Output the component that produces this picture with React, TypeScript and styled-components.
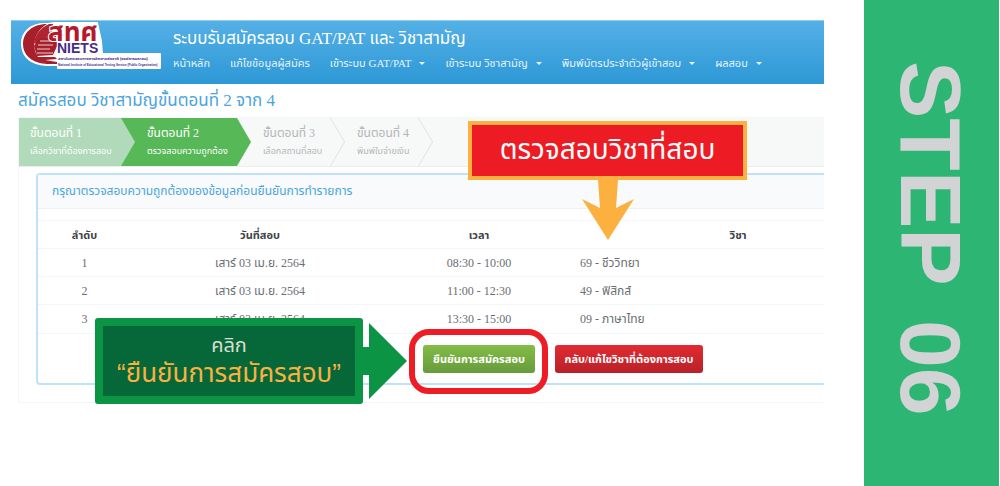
import React from 'react';
import styled, { createGlobalStyle, css } from 'styled-components';

const thai = `"Liberation Serif", "Noto Sans Thai", "Open Sans", sans-serif`;
const sans = `"Liberation Sans", "Noto Sans Thai", sans-serif`;

const GlobalStyle = createGlobalStyle`
  * { box-sizing: border-box; }
  body { margin: 0; background: #fff; font-family: ${thai}; color: #4c5156; }
`;

const Page = styled.div`
  display: flex;
  min-height: 100vh;
  padding-right: 1px;
`;

const Portal = styled.main`
  flex: 1;
  min-width: 0;
  margin: 20px 40px 20px 11px;
`;

const StepBanner = styled.aside`
  flex: 0 0 135px;
  display: flex;
  padding: 61px 2px 0 0;
  justify-content: center;
  background: #2db673;
  color: #d1d3d4;
`;

const BannerText = styled.h1`
  display: flex;
  gap: 34px;
  margin: 0;
  font: bold 86px/100px "Liberation Sans", sans-serif;
  writing-mode: vertical-rl;
  white-space: nowrap;
`;

const Header = styled.header`
  display: flex;
  gap: 12px;
  height: 64px;
  padding-left: 9px;
  background: linear-gradient(#54b0e5, #2d98d6);
  border-top: 1px solid #8fcdf0;
  color: #fff;
`;

const Logo = styled.svg`
  flex: none;
  width: 141px;
  height: 54px;
  overflow: visible;
`;

const HeaderBody = styled.div`
  flex: 1;
  min-width: 0;
`;

const SiteTitle = styled.h2`
  margin: 6px 0 0;
  font-size: 17px;
  font-weight: 400;
  line-height: 24px;
  white-space: nowrap;
`;

const Nav = styled.nav`
  display: flex;
  gap: 20px;
  margin-top: 4px;
`;

const NavLink = styled.a<{ $menu?: boolean }>`
  display: flex;
  align-items: center;
  gap: 8px;
  color: #e6f4fc;
  font-size: 11px;
  line-height: 16px;
  text-decoration: none;
  white-space: nowrap;
  ${(p) => p.$menu && css`
    &::after {
      content: '';
      border: 3px solid transparent;
      border-top-color: currentColor;
      border-bottom: 0;
    }
  `}
`;

const PageTitle = styled.h2`
  margin: 5px 0 4px 7px;
  font-size: 17px;
  font-weight: 400;
  line-height: 24px;
  color: #4ba5dd;
`;

const Wizard = styled.section`
  position: relative;
  margin-left: 7px;
  border: 1px solid #f3f5f6;
  border-right: 0;
  border-radius: 3px 0 0 3px;
`;

const Steps = styled.ol`
  display: flex;
  height: 49px;
  margin: 0;
  padding: 0;
  list-style: none;
  background: #f7f8f8;
  border-bottom: 1px solid #eceeee;
`;

const tones = {
  done: { fill: '#b0dab9', edge: '#b0dab9', text: '#fff' },
  active: { fill: '#56b857', edge: '#56b857', text: '#fff' },
  todo: { fill: '#f7f8f8', edge: '#e0e2e2', text: '#b3b6b8' },
};

const Step = styled.li<{ $tone: keyof typeof tones; $width: number; $layer: number }>`
  position: relative;
  z-index: ${(p) => p.$layer};
  flex: 0 0 ${(p) => p.$width}px;
  margin-right: -14px;
  padding: 6px 0 0 26px;
  background: ${(p) => tones[p.$tone].edge};
  color: ${(p) => tones[p.$tone].text};
  clip-path: polygon(0 0, calc(100% - 14px) 0, 100% 50%, calc(100% - 14px) 100%, 0 100%);
  white-space: nowrap;
  &:first-child { padding-left: 11px; }
  &::before {
    content: '';
    position: absolute;
    z-index: -1;
    inset: 0 1px 0 0;
    background: ${(p) => tones[p.$tone].fill};
    clip-path: polygon(0 0, calc(100% - 14px) 0, 100% 50%, calc(100% - 14px) 100%, 0 100%);
  }
`;

const StepName = styled.div`
  font-size: 12px;
  line-height: 18px;
`;

const StepNote = styled.div`
  font-size: 9px;
  line-height: 18px;
`;

const Panel = styled.div`
  margin: 6px 0 17px 17px;
  border: 2px solid #bfe2f8;
  border-right: 0;
  border-radius: 4px 0 0 4px;
`;

const PanelTitle = styled.h3`
  margin: 0 0 11px;
  padding: 0 14px;
  border-bottom: 1px solid #f0f1f2;
  background: #f8fafc;
  color: #4ba5dd;
  font-size: 12px;
  font-weight: 400;
  line-height: 33px;
`;

const TableView = styled.div`
  overflow: hidden;
`;

const Table = styled.table`
  width: calc(100% + 83px);
  table-layout: fixed;
  border-collapse: collapse;
  font-size: 12px;
  color: #6a6e72;
  tr { height: 28px; }
  th, td { padding: 0; border-top: 1px solid #f3f6f9; text-align: center; line-height: 16px; }
  th { font-size: 11px; color: #3f4448; }
  td:last-child { padding-left: 11px; text-align: left; }
`;

const Col = styled.col<{ $width?: number }>`
  width: ${(p) => (p.$width ? `${p.$width}px` : 'auto')};
`;

const Actions = styled.div`
  display: flex;
  gap: 20px;
  padding: 11px 0 10px 385px;
  border-top: 1px solid #f3f6f9;
`;

const ActionSlot = styled.div`
  position: relative;
`;

const Button = styled.button<{ $kind: 'confirm' | 'back' }>`
  display: block;
  width: ${(p) => (p.$kind === 'confirm' ? 112 : 148)}px;
  height: 28px;
  padding: 0;
  border: 0;
  border-radius: 3px;
  background: ${(p) => (p.$kind === 'confirm' ? 'linear-gradient(#83bd45, #689a3c)' : 'linear-gradient(#e22a33, #b92128)')};
  color: #fff;
  font: bold 11px/16px ${thai};
  white-space: nowrap;
`;

const Ring = styled.div`
  position: absolute;
  inset: -16px -13px -21px -14px;
  border: 6px solid #ee1c25;
  border-radius: 20px;
  pointer-events: none;
`;

const ClickHint = styled.div`
  position: absolute;
  top: -27px;
  right: 128px;
  display: flex;
  align-items: center;
`;

const ClickBox = styled.div`
  width: 268px;
  height: 86px;
  padding: 5px 0;
  border: 8px solid #0b9444;
  border-radius: 3px;
  background: #066838;
  color: #d7dfd2;
  text-align: center;
  font: 20px/28px ${sans};
  white-space: nowrap;
`;

const ClickTarget = styled.div`
  color: #fbb040;
  font-size: 26px;
`;

const ClickArrow = styled.svg`
  width: 44px;
  height: 76px;
`;

const SubjectHint = styled.div`
  position: absolute;
  top: 3px;
  left: 449px;
  z-index: 10;
  display: flex;
  flex-direction: column;
  align-items: center;
`;

const SubjectBox = styled.div`
  width: 279px;
  height: 59px;
  border: 4px solid #fbb040;
  background: #ed1c24;
  color: #fff;
  text-align: center;
  font: 28px/50px ${sans};
  white-space: nowrap;
`;

const SubjectArrow = styled.svg`
  width: 52px;
  height: 60px;
`;

const navItems = [
  { label: 'หน้าหลัก' },
  { label: 'แก้ไขข้อมูลผู้สมัคร' },
  { label: 'เข้าระบบ GAT/PAT', menu: true },
  { label: 'เข้าระบบ วิชาสามัญ', menu: true },
  { label: 'พิมพ์บัตรประจำตัวผู้เข้าสอบ', menu: true },
  { label: 'ผลสอบ', menu: true },
];

const steps = [
  { note: 'เลือกวิชาที่ต้องการสอบ', tone: 'done', width: 116 },
  { note: 'ตรวจสอบความถูกต้อง', tone: 'active', width: 130 },
  { note: 'เลือกสถานที่สอบ', tone: 'todo', width: 108 },
  { note: 'พิมพ์ใบจ่ายเงิน', tone: 'todo', width: 102 },
] as const;

const exams = [
  { time: '08:30 - 10:00', subject: '69 - ชีววิทยา' },
  { time: '11:00 - 12:30', subject: '49 - ฟิสิกส์' },
  { time: '13:30 - 15:00', subject: '09 - ภาษาไทย' },
];

function NietsLogo() {
  return (
    <Logo viewBox="0 0 141 54" role="img" aria-label="สทศ NIETS">
      <path
        d="M28 3C10 2 1 12 2 24c1 12 9 19 24 20h12v3h102V33H82l-1-13-4-18H34z"
        fill="#fff" stroke="#fff" strokeWidth="2" strokeLinejoin="round"
      />
      <path d="M27 3C12 3 3 12 3 23c0 10 7 18 22 20C11 34 10 13 27 3z" fill="#a71f2b" />
      <path d="M29 3c-9 4-14 11-15 19l4 2c2-5 7-8 13-9l2-12z" fill="#b02430" />
      <path d="M14 25 20 17l16-2 2 8-5 11-16 1z" fill="#a71f2b" />
      <path d="M20 20h13M18 24h15M17 28h13M17 32h16" stroke="#e9cfd2" strokeWidth="1" />
      <path d="M17 36h18l2 2-12 1 12 2v2H26c-4-1-7-4-9-7z" fill="#a71f2b" />
      <g fontFamily={sans} fontWeight="bold">
        <text x="28" y="20" fontSize="26" fill="#b5182b" stroke="#fff" strokeWidth="2" paintOrder="stroke">สทศ</text>
        <text x="37" y="32" fontSize="14" fill="#4a2b85" stroke="#fff" strokeWidth="2" paintOrder="stroke">NIETS</text>
        <text x="38" y="39" fontSize="4" fill="#4a2b85">สถาบันทดสอบทางการศึกษาแห่งชาติ (องค์การมหาชน)</text>
        <text x="38" y="45" fontSize="3" fill="#4a2b85">National Institute of Educational Testing Service (Public Organization)</text>
      </g>
    </Logo>
  );
}

export default function App() {
  return (
    <>
      <GlobalStyle />
      <Page>
        <Portal>
          <Header>
            <NietsLogo />
            <HeaderBody>
              <SiteTitle>ระบบรับสมัครสอบ GAT/PAT และ วิชาสามัญ</SiteTitle>
              <Nav>
                {navItems.map((item) => (
                  <NavLink key={item.label} href="#" $menu={item.menu}>{item.label}</NavLink>
                ))}
              </Nav>
            </HeaderBody>
          </Header>
          <PageTitle>สมัครสอบ วิชาสามัญขั้นตอนที่ 2 จาก 4</PageTitle>
          <Wizard>
            <Steps>
              {steps.map((step, i) => (
                <Step key={step.note} $tone={step.tone} $width={step.width} $layer={steps.length - i}>
                  <StepName>ขั้นตอนที่ {i + 1}</StepName>
                  <StepNote>{step.note}</StepNote>
                </Step>
              ))}
            </Steps>
            <SubjectHint>
              <SubjectBox>ตรวจสอบวิชาที่สอบ</SubjectBox>
              <SubjectArrow viewBox="0 0 52 60" aria-hidden="true">
                <path d="M16 0h20l-2 28 18-9-26 41L0 19l18 9z" fill="#fbb040" />
              </SubjectArrow>
            </SubjectHint>
            <Panel>
              <PanelTitle>กรุณาตรวจสอบความถูกต้องของข้อมูลก่อนยืนยันการทำรายการ</PanelTitle>
              <TableView>
                <Table>
                  <colgroup>
                    <Col $width={93} />
                    <Col $width={258} />
                    <Col $width={180} />
                    <Col />
                  </colgroup>
                  <thead>
                    <tr><th>ลำดับ</th><th>วันที่สอบ</th><th>เวลา</th><th>วิชา</th></tr>
                  </thead>
                  <tbody>
                    {exams.map((exam, i) => (
                      <tr key={exam.subject}>
                        <td>{i + 1}</td>
                        <td>เสาร์ 03 เม.ย. 2564</td>
                        <td>{exam.time}</td>
                        <td>{exam.subject}</td>
                      </tr>
                    ))}
                  </tbody>
                </Table>
              </TableView>
              <Actions>
                <ActionSlot>
                  <Button type="button" $kind="confirm">ยืนยันการสมัครสอบ</Button>
                  <Ring />
                  <ClickHint>
                    <ClickBox>
                      <div>คลิก</div>
                      <ClickTarget>“ยืนยันการสมัครสอบ”</ClickTarget>
                    </ClickBox>
                    <ClickArrow viewBox="0 0 44 76" aria-hidden="true">
                      <path d="M0 24h6V0l38 38L6 76V52H0z" fill="#0b9444" />
                    </ClickArrow>
                  </ClickHint>
                </ActionSlot>
                <ActionSlot>
                  <Button type="button" $kind="back">กลับ/แก้ไขวิชาที่ต้องการสอบ</Button>
                </ActionSlot>
              </Actions>
            </Panel>
          </Wizard>
        </Portal>
        <StepBanner>
          <BannerText>
            <span>STEP</span>
            <span>06</span>
          </BannerText>
        </StepBanner>
      </Page>
    </>
  );
}
